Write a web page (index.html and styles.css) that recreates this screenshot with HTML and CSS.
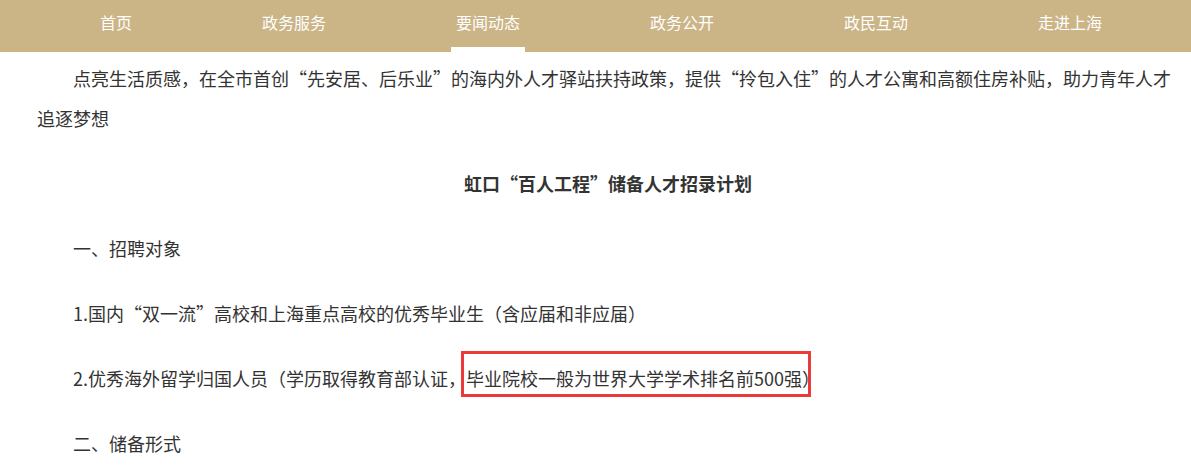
FILE: index.html
```html
<!DOCTYPE html>
<html lang="zh-CN">

<head>
    <meta charset="UTF-8">
    <meta name="viewport" content="width=device-width, initial-scale=1.0">
    <title>要闻动态</title>
    <link rel="stylesheet" href="styles.css">
</head>

<body>
    <div class="nav-bar">
        <ul class="nav-list">
            <li><a href="#">首页</a></li>
            <li><a href="#">政务服务</a></li>
            <li><a href="#" class="active">要闻动态</a></li>
            <li><a href="#">政务公开</a></li>
            <li><a href="#">政民互动</a></li>
            <li><a href="#">走进上海</a></li>
        </ul>
    </div>
    <div class="article">
        <p class="indent">点亮生活质感，在全市首创“先安居、后乐业”的海内外人才驿站扶持政策，提供“拎包入住”的人才公寓和高额住房补贴，助力青年人才追逐梦想</p>
        <p class="title">虹口“百人工程”储备人才招录计划</p>
        <p class="indent">一、招聘对象</p>
        <p class="indent">1.国内“双一流”高校和上海重点高校的优秀毕业生（含应届和非应届）</p>
        <p class="indent">2.优秀海外留学归国人员（学历取得教育部认证，<span class="mark">毕业院校一般为世界大学学术排名前500强</span>）</p>
        <p class="indent">二、储备形式</p>
    </div>
</body>

</html>
```

FILE: styles.css
```css
body {
    font-family: 'Noto Sans CJK SC', 'Microsoft YaHei', sans-serif;
    color: #333;
    background: #fff;
    margin: 0;
}

.nav-bar {
    background: #cbb486;
    height: 52px;
}

.nav-list {
    list-style: none;
    margin: 0;
    padding: 0 0 0 95px;
    display: flex;
    gap: 120px;
}

.nav-list a {
    display: block;
    height: 52px;
    box-sizing: border-box;
    padding: 0 5px 3px 5px;
    line-height: 44px;
    font-size: 16px;
    color: #fff;
    text-decoration: none;
    border-bottom: 5px solid transparent;
}

.nav-list a.active {
    border-bottom-color: #fff;
}

.article {
    padding: 6px 12px 0 37px;
    font-size: 18px;
    line-height: 40px;
}

.article p {
    margin: 0 0 25px 0;
}

.indent {
    text-indent: 2em;
}

.title {
    text-align: center;
    font-weight: bold;
}

.mark {
    position: relative;
}

.mark::after {
    content: '';
    position: absolute;
    left: -5px;
    right: -9px;
    top: -14px;
    bottom: -6px;
    border: 3px solid #ea3a3a;
}
```
